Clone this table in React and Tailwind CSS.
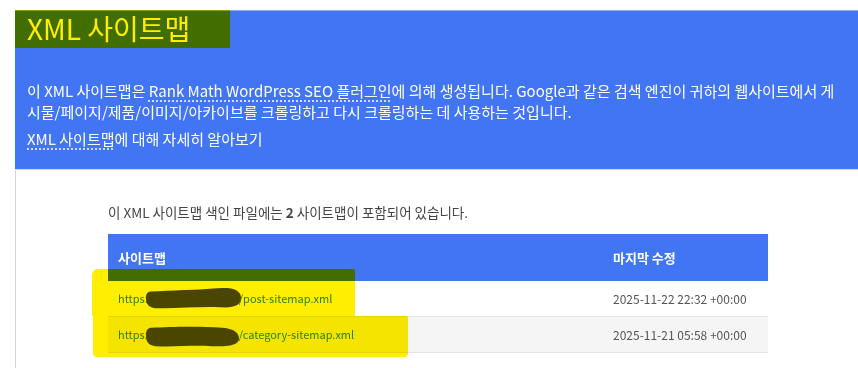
import React from "react";

const font = { fontFamily: '"Noto Sans CJK KR", "Noto Sans", sans-serif' };

function Blob({ className, d }) {
  return (
    <svg className={className} viewBox="0 0 100 24" preserveAspectRatio="none">
      <path d={d} fill="#4a4600" />
    </svg>
  );
}

export default function App() {
  const rows = [
    { path: "/post-sitemap.xml", date: "2025-11-22 22:32 +00:00", bg: "bg-white" },
    { path: "/category-sitemap.xml", date: "2025-11-21 05:58 +00:00", bg: "bg-[#f5f5f5]" },
  ];
  return (
    <div
      className="relative w-[858px] h-[368px] overflow-hidden bg-white pt-[10px] pl-[15px]"
      style={font}
    >
      <div className="bg-[#4275f4] border-t border-[#8ea9f6] border-b border-b-[#d4d8f4] h-[160px] pl-3 text-white">
        <h1 className="h-[37px] leading-[35px] text-[28px] font-normal">
          XML 사이트맵
        </h1>
        <div className="mt-[32px] text-[15px] leading-[21px]">
          <p className="whitespace-nowrap">
            이 XML 사이트맵은{" "}
            <span className="underline decoration-dotted underline-offset-[4px]">
              Rank Math WordPress SEO 플러그인
            </span>
            에 의해 생성됩니다. Google과 같은 검색 엔진이 귀하의 웹사이트에서 게
          </p>
          <p className="whitespace-nowrap">
            시물/페이지/제품/이미지/아카이브를 크롤링하고 다시 크롤링하는 데 사용하는 것입니다.
          </p>
          <p className="mt-[6px] whitespace-nowrap">
            <span className="underline decoration-dotted underline-offset-[4px]">XML 사이트맵</span>에 대해 자세히
            알아보기
          </p>
        </div>
      </div>

      <div className="border-l border-[#d4d4d4] h-[300px] pl-[92px] pt-[33px]">
        <p className="text-[13.5px] leading-[18px] text-[#444]">
          이 XML 사이트맵 색인 파일에는 <b className="font-bold">2</b> 사이트맵이 포함되어 있습니다.
        </p>
        <div className="mt-[13px] w-[660px] text-[12px]">
          <div className="flex h-[47px] items-center bg-[#4275f4] text-[13px] font-bold text-white">
            <div className="w-[495px] pl-[10px]">사이트맵</div>
            <div className="pl-[10px]">마지막 수정</div>
          </div>
          {rows.map((r) => (
            <div
              key={r.path}
              className={`flex h-[36px] items-center border-b border-[#e4e4e4] ${r.bg}`}
            >
              <div className="w-[495px] pl-[10px] whitespace-nowrap text-[11px] text-[#2f8aa6]">
                https:
                <span className="inline-block w-[91px] overflow-hidden align-bottom">//example.kr</span>
                {r.path}
              </div>
              <div className="pl-[10px] text-[#555] whitespace-nowrap">{r.date}</div>
            </div>
          ))}
        </div>
      </div>

      {/* highlighter marks */}
      <div className="pointer-events-none absolute left-[15px] top-[10px] h-[38px] w-[215px] bg-[#ffee00] mix-blend-multiply" />
      <div className="pointer-events-none absolute left-[92px] top-[269px] h-[47px] w-[263px] rounded-tl-[6px] rounded-tr-[2px] bg-[#ffee00] mix-blend-multiply" />
      <div className="pointer-events-none absolute left-[93px] top-[316px] h-[41px] w-[315px] rounded-b-[4px] rounded-tr-[2px] bg-[#ffee00] mix-blend-multiply" />

      {/* redaction scribbles */}
      <Blob
        className="pointer-events-none absolute left-[146px] top-[288px] h-[21px] w-[95px]"
        d="M6 4 C 25 3, 55 2, 80 0 C 96 -1, 100 6, 100 11 C 100 19, 94 23, 78 22 C 55 21, 30 24, 10 23 C 1 22, 0 16, 0 11 C 0 6, 2 4, 6 4 Z"
      />
      <Blob
        className="pointer-events-none absolute left-[146px] top-[326px] h-[21px] w-[93px]"
        d="M6 2 C 25 1, 55 0, 82 2 C 96 3, 100 9, 100 14 C 100 21, 92 24, 70 23 C 50 22, 28 24, 10 23 C 1 22, 0 16, 0 10 C 0 5, 2 2, 6 2 Z"
      />
    </div>
  );
}
